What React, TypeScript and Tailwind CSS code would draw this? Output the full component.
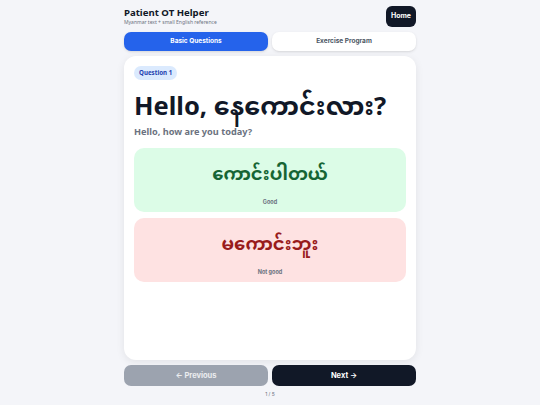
import { useState } from "react";

const answers = [
  {
    my: "ကောင်းပါတယ်",
    en: "Good",
    box: "bg-[#dcfce7]",
    text: "text-[#166534]",
  },
  {
    my: "မကောင်းဘူး",
    en: "Not good",
    box: "bg-[#fee2e2]",
    text: "text-[#991b1b]",
  },
];

const App = () => {
  const [tab, setTab] = useState("basic");

  return (
    <div className="min-h-screen bg-[#f4f5f9] font-['Noto_Sans','Noto_Sans_Myanmar',sans-serif] text-[#111827]">
      <div className="w-[292px] mx-auto pt-[6px] flex flex-col">
        {/* Header */}
        <div className="flex items-center justify-between h-[21px]">
          <div className="flex flex-col">
            <h1 className="text-[9.6px] font-bold leading-[12px]">
              Patient OT Helper
            </h1>
            <p className="text-[5px] leading-[7px] text-[#6b7280]">
              Myanmar text + small English reference
            </p>
          </div>
          <button className="h-[21px] px-[5px] rounded-[6px] bg-[#111827] text-white text-[7px] font-bold font-['Inter',sans-serif]">
            Home
          </button>
        </div>

        {/* Tabs */}
        <div className="grid grid-cols-2 gap-[4px] mt-[5px]">
          <button
            onClick={() => setTab("basic")}
            className={
              tab === "basic"
                ? "h-[19px] rounded-[7px] bg-[#2563eb] text-white text-[6.5px] font-bold font-['Inter',sans-serif] shadow-sm"
                : "h-[19px] rounded-[7px] bg-white text-[#4b5563] text-[6.5px] font-bold font-['Inter',sans-serif] shadow-sm"
            }
          >
            Basic Questions
          </button>
          <button
            onClick={() => setTab("exercise")}
            className={
              tab === "exercise"
                ? "h-[19px] rounded-[7px] bg-[#2563eb] text-white text-[6.5px] font-bold font-['Inter',sans-serif] shadow-sm"
                : "h-[19px] rounded-[7px] bg-white text-[#4b5563] text-[6.5px] font-bold font-['Inter',sans-serif] shadow-sm"
            }
          >
            Exercise Program
          </button>
        </div>

        {/* Question card */}
        <div className="mt-[5px] h-[304px] bg-white rounded-[12px] shadow-[0_2px_8px_rgba(0,0,0,0.08)] px-[10px] pt-[10px] flex flex-col">
          <span className="self-start h-[14px] px-[5px] flex items-center rounded-full bg-[#dbeafe] text-[#1e40af] text-[6.2px] font-bold">
            Question 1
          </span>
          <h2 className="mt-[7px] text-[25.5px] font-bold leading-[36px]">
            Hello, နေကောင်းလား?
          </h2>
          <p className="mt-[2px] text-[9.2px] font-bold text-[#6b7280] leading-[13px]">
            Hello, how are you today?
          </p>

          <div className="mt-[10px] flex flex-col gap-[6px]">
            {answers.map((a) => (
              <button
                key={a.en}
                className={`h-[64px] rounded-[10px] ${a.box} flex flex-col items-center pt-[11px]`}
              >
                <span className={`text-[18px] font-bold leading-[29px] ${a.text}`}>
                  {a.my}
                </span>
                <span className="mt-[10px] text-[5.5px] font-bold text-[#6b7280] font-['Inter',sans-serif] leading-[8px]">
                  {a.en}
                </span>
              </button>
            ))}
          </div>
        </div>

        {/* Navigation */}
        <div className="grid grid-cols-2 gap-[4px] mt-[5px]">
          <button className="h-[21px] rounded-[7px] bg-[#9ca3af] text-white/80 text-[7.5px] font-bold font-['Inter',sans-serif]">
            ← Previous
          </button>
          <button className="h-[21px] rounded-[7px] bg-[#111827] text-white text-[7.5px] font-bold font-['Inter',sans-serif]">
            Next →
          </button>
        </div>
        <p className="mt-[5px] text-center text-[5px] text-[#6b7280] font-['Inter',sans-serif]">
          1 / 5
        </p>
      </div>
    </div>
  );
};

export default App;
